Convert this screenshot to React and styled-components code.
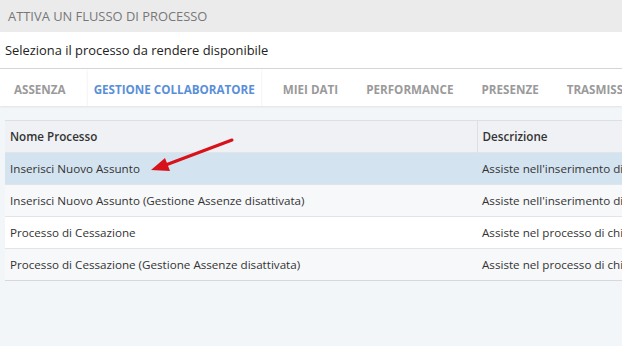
import React from 'react'
import styled, { createGlobalStyle } from 'styled-components'

const GlobalStyle = createGlobalStyle`
  html, body {
    margin: 0;
    padding: 0;
    background: #f3f6f9;
    font-family: "Open Sans", "Liberation Sans", sans-serif;
  }
`

const Page = styled.div`
  width: 622px;
  height: 346px;
  overflow: hidden;
  background: #f3f6f9;
  position: relative;
`

const TitleBar = styled.div`
  height: 32px;
  background: #ebebeb;
  display: flex;
  align-items: center;
  padding: 0 8px;
  font-size: 12.9px;
  color: #777;
  text-transform: uppercase;
`

const Subtitle = styled.div`
  height: 36px;
  background: #fff;
  display: flex;
  align-items: center;
  padding: 0 5px;
  font-size: 12.9px;
  color: #222;
  border-bottom: 1px solid #d6d6d6;
`

const TabBar = styled.div`
  height: 37px;
  background: #fff;
  display: flex;
  gap: 16px;
  padding: 0 8px;
  box-shadow: 0 1px 2px rgba(0, 0, 0, 0.08);
  white-space: nowrap;
  overflow: hidden;
`

const Tab = styled.div`
  display: flex;
  align-items: center;
  padding: 4px 6px 0;
  font-size: 11.65px;
  font-weight: 700;
  text-transform: uppercase;
  color: ${p => (p.active ? '#5a8fd8' : '#9a9a9a')};
  box-shadow: ${p =>
    p.active ? '0 2px 2px -1px rgba(90, 143, 216, 0.6), 0 0 3px rgba(0,0,0,0.05)' : 'none'};
`

const TableWrap = styled.div`
  margin: 14px 0 0 5px;
  position: relative;
`

const Table = styled.table`
  width: 640px;
  border-collapse: collapse;
  font-size: 11.65px;
  color: #333;
  table-layout: fixed;
  border-top: 1px solid #dcdfe3;
  border-bottom: 1px solid #d6d8dc;
`

const Th = styled.th`
  height: 31px;
  text-align: left;
  font-weight: 600;
  padding: 0 5px;
  background: #eff1f4;
  color: #333;
  & + & {
    border-left: 1px solid #dcdfe3;
  }
`

const Row = styled.tr`
  background: ${p => p.bg};
  border-top: 1px solid #e1e5ea;
`

const Td = styled.td`
  height: 31px;
  padding: 0 5px;
  white-space: nowrap;
  overflow: hidden;
`

const Arrow = styled.svg`
  position: absolute;
  left: 141px;
  top: 132px;
`

const rows = [
  ['Inserisci Nuovo Assunto', "Assiste nell'inserimento di un nuovo assunto", '#d4e3f0'],
  ['Inserisci Nuovo Assunto (Gestione Assenze disattivata)', "Assiste nell'inserimento di un nuovo assunto", '#f7f8fa'],
  ['Processo di Cessazione', 'Assiste nel processo di chiusura', '#ffffff'],
  ['Processo di Cessazione (Gestione Assenze disattivata)', 'Assiste nel processo di chiusura', '#f7f8fa'],
]

const tabs = ['Assenza', 'Gestione Collaboratore', 'Miei Dati', 'Performance', 'Presenze', 'Trasmissioni']

export default function App() {
  return (
    <Page>
      <GlobalStyle />
      <TitleBar>Attiva un flusso di processo</TitleBar>
      <Subtitle>Seleziona il processo da rendere disponibile</Subtitle>
      <TabBar>
        {tabs.map((t, i) => (
          <Tab key={t} active={i === 1}>{t}</Tab>
        ))}
      </TabBar>
      <TableWrap>
        <Table>
          <colgroup>
            <col style={{ width: 472 }} />
            <col />
          </colgroup>
          <thead>
            <tr>
              <Th>Nome Processo</Th>
              <Th>Descrizione</Th>
            </tr>
          </thead>
          <tbody>
            {rows.map(r => (
              <Row key={r[0]} bg={r[2]}>
                <Td>{r[0]}</Td>
                <Td>{r[1]}</Td>
              </Row>
            ))}
          </tbody>
        </Table>
      </TableWrap>
      <Arrow width="100" height="45" viewBox="0 0 100 45">
        <line x1="91" y1="8" x2="22" y2="34" stroke="#d7121a" strokeWidth="3" strokeLinecap="round" />
        <polygon points="10,38 24,26 29,39" fill="#d7121a" />
      </Arrow>
    </Page>
  )
}
